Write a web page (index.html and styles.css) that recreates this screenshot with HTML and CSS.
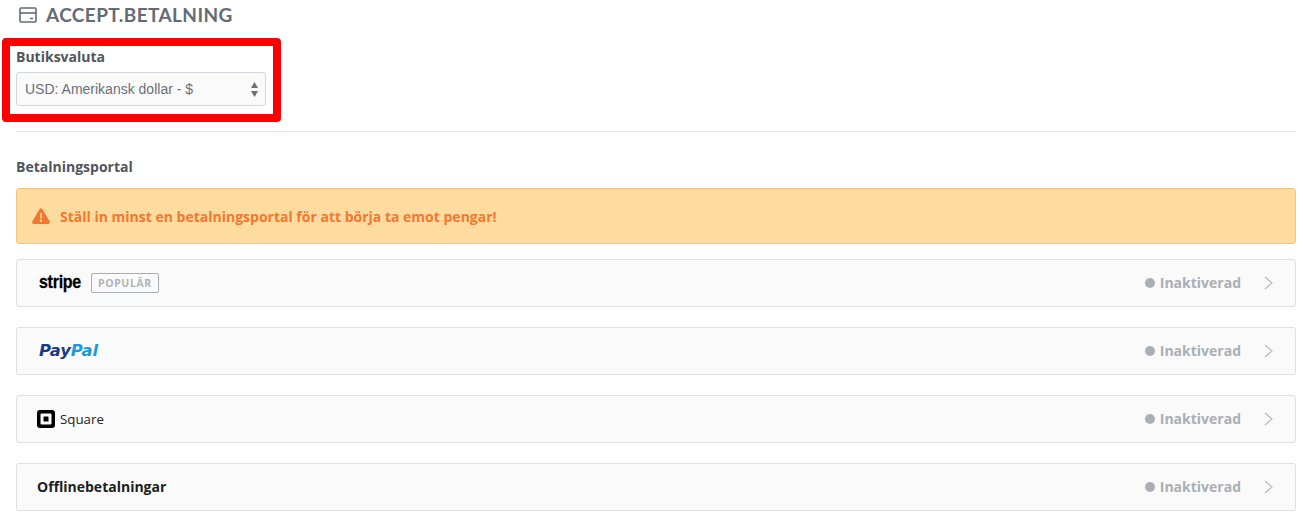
FILE: index.html
```html
<!DOCTYPE html>
<html lang="sv">
<head>
<meta charset="utf-8">
<title>Accept.betalning</title>
<link rel="stylesheet" href="styles.css">
</head>
<body>
<main class="page">
  <h1 class="title">
    <svg class="title-icon" width="18" height="16" viewBox="0 0 18 16" fill="none" stroke="#646b75" stroke-width="1.6"><rect x="1" y="1" width="16" height="14" rx="1"/><path d="M1 6h16"/><path d="M11 11.500h3"/></svg>
    ACCEPT.BETALNING
  </h1>
  <section class="currency">
    <div class="highlight"></div>
    <label class="label" for="cur">Butiksvaluta</label>
    <div class="select" id="cur">
      <span>USD: Amerikansk dollar - $</span>
      <svg class="updown" width="7" height="15" viewBox="0 0 7 15" fill="#6b7078"><path d="M3.500 0 7 6H0z"/><path d="M3.500 15 0 9h7z"/></svg>
    </div>
  </section>
  <hr class="divider">
  <h2 class="label portal-label">Betalningsportal</h2>
  <div class="alert">
    <svg width="18" height="16" viewBox="0 0 18 16"><path fill="#f5772f" d="M7.600 1c.6-1.100 2.200-1.100 2.800 0l7.300 12.500c.6 1.100-.2 2.500-1.400 2.500H1.700C.5 16-.3 14.600.3 13.500z"/><path fill="#fedc9f" d="M8 5h2l-.2 5.500H8.200zM9 11.500a1.200 1.200 0 1 1 0 2.400 1.200 1.200 0 0 1 0-2.400z"/></svg>
    <span>Ställ in minst en betalningsportal för att börja ta emot pengar!</span>
  </div>
  <div class="rows">
    <div class="row">
      <div class="brand stripe-wrap"><span class="stripe">stripe</span><span class="badge">POPULÄR</span></div>
      <div class="status"><i class="dot"></i><span class="status-text">Inaktiverad</span><svg class="chev" width="9" height="14" viewBox="0 0 9 14" fill="none" stroke="#b6babf" stroke-width="1.200"><path d="M1 1l7 6-7 6"/></svg></div>
    </div>
    <div class="row">
      <div class="brand paypal-wrap"><span class="paypal"><span class="pay">Pay</span><span class="pal">Pal</span></span></div>
      <div class="status"><i class="dot"></i><span class="status-text">Inaktiverad</span><svg class="chev" width="9" height="14" viewBox="0 0 9 14" fill="none" stroke="#b6babf" stroke-width="1.200"><path d="M1 1l7 6-7 6"/></svg></div>
    </div>
    <div class="row">
      <div class="brand square-wrap">
        <svg width="18" height="18" viewBox="0 0 18 18"><path fill-rule="evenodd" d="M3 0h12a3 3 0 0 1 3 3v12a3 3 0 0 1-3 3H3a3 3 0 0 1-3-3V3a3 3 0 0 1 3-3zm1.500 3.500a1 1 0 0 0-1 1v9a1 1 0 0 0 1 1h9a1 1 0 0 0 1-1v-9a1 1 0 0 0-1-1z"/><rect x="6.500" y="6.500" width="5" height="5" rx=".5"/></svg>
        <span class="square">Square</span>
      </div>
      <div class="status"><i class="dot"></i><span class="status-text">Inaktiverad</span><svg class="chev" width="9" height="14" viewBox="0 0 9 14" fill="none" stroke="#b6babf" stroke-width="1.200"><path d="M1 1l7 6-7 6"/></svg></div>
    </div>
    <div class="row">
      <div class="brand offline">Offlinebetalningar</div>
      <div class="status"><i class="dot"></i><span class="status-text">Inaktiverad</span><svg class="chev" width="9" height="14" viewBox="0 0 9 14" fill="none" stroke="#b6babf" stroke-width="1.200"><path d="M1 1l7 6-7 6"/></svg></div>
    </div>
  </div>
</main>
</body>
</html>
```
FILE: styles.css
```css
* { box-sizing: border-box; }
html, body { margin: 0; background: #fff; }
body { font-family: "Open Sans", sans-serif; overflow: hidden; }
.page { padding: 0 7px 6px 16px; height: 517px; }
.title {
  display: flex; align-items: center; gap: 9px;
  height: 30px; margin: 0 0 0 3px;
  font: 700 19px/30px Lato, sans-serif;
  color: #646b75; letter-spacing: .4px;
}
.title-icon { flex: none; }
.currency { position: relative; padding-top: 17px; width: 250px; }
.highlight {
  position: absolute; left: -14px; top: 8px;
  width: 279px; height: 84px;
  border: 8px solid #f00; border-radius: 4px;
}
.label {
  display: block; margin: 0;
  font: 700 14px/19px "Open Sans", sans-serif;
  color: #50555e;
}
.select {
  display: flex; align-items: center; justify-content: space-between;
  height: 34px; margin-top: 6px; padding: 0 7px 0 8px;
  background: #fafafa; border: 1px solid #d3d6da; border-radius: 3px;
  font: 14px/20px "Liberation Sans", Arial, sans-serif;
  color: #6b7078;
}
.divider { height: 1px; margin: 25px 0 0; border: 0; background: #e5e6e8; }
.portal-label { margin-top: 25px; }
.alert {
  display: flex; align-items: center; gap: 10px;
  height: 56px; margin-top: 12px; padding: 0 15px;
  background: #fedc9f; border: 1px solid #fbc27e; border-radius: 3px;
  font: 700 14px/19px "Open Sans", sans-serif;
  color: #f5772f;
}
.rows { display: flex; flex-direction: column; gap: 20px; margin-top: 15px; }
.row {
  display: flex; align-items: center; justify-content: space-between;
  height: 48px; padding: 0 22px 0 21px;
  background: #fafafa; border: 1px solid #e0e1e3; border-radius: 3px;
}
.brand { display: flex; align-items: center; }
.stripe-wrap { padding-left: 1px; }
.stripe {
  display: inline-block; width: 52px; padding-bottom: 2px;
  font: 700 19px/22px "Liberation Sans", sans-serif;
  color: #000; letter-spacing: -.3px;
  -webkit-text-stroke: .3px #000;
  transform: scaleX(.84); transform-origin: left center;
}
.badge {
  height: 20px; padding: 0 6px;
  border: 1px solid #a9aeb4; border-radius: 2px;
  font: 700 10.500px/18px "Open Sans", sans-serif;
  color: #b0b4b9; letter-spacing: .6px;
}
.paypal-wrap { padding-left: 1px; }
.paypal { font: italic 700 16.300px/22px "DejaVu Sans", sans-serif; letter-spacing: -.1px; }
.pay { color: #1b3a86; }
.pal { color: #1d9ad9; }
.square-wrap { gap: 5px; margin-left: -1px; }
.square { font: 13.300px/20px "Open Sans", sans-serif; color: #222; }
.offline { padding-bottom: 2px; font: 700 14px/19px "Open Sans", sans-serif; color: #1c1e21; margin-left: -1px; }
.status {
  display: flex; align-items: center;
  font: 700 14px/19px "Open Sans", sans-serif;
  color: #a9afb5;
}
.status-text { padding-bottom: 2px; }
.dot { width: 10px; height: 10px; margin-right: 5px; border-radius: 50%; background: #a9afb5; }
.chev { margin-left: 23px; }
```
